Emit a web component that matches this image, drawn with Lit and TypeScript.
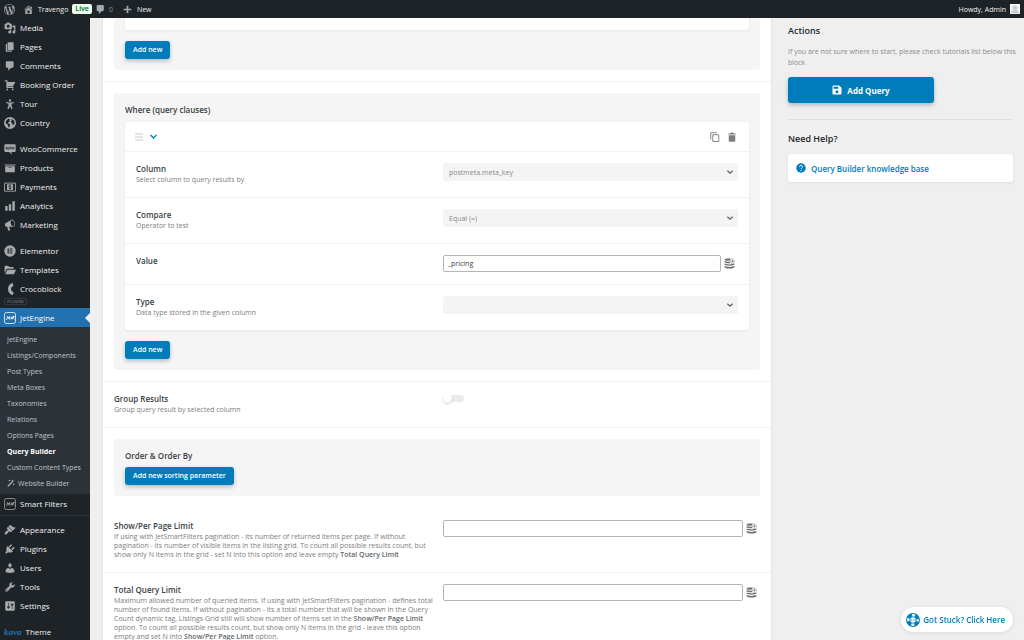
import { LitElement, html, css, svg, nothing, TemplateResult } from "lit";
import { customElement, property } from "lit/decorators.js";
import { classMap } from "lit/directives/class-map.js";

const p = (d: string) => svg`<path d=${d} />`;

const GLYPHS: Record<string, TemplateResult> = {
  wordpress: p("M20 10c0-5.51-4.49-10-10-10C4.48 0 0 4.49 0 10c0 5.52 4.48 10 10 10 5.51 0 10-4.48 10-10zM7.78 15.37L4.37 6.22c.55-.02 1.17-.08 1.17-.08.5-.06.44-1.13-.06-1.11 0 0-1.45.11-2.37.11-.18 0-.37 0-.58-.01C4.12 2.69 6.87 1.11 10 1.11c2.33 0 4.45.87 6.05 2.34-.68-.11-1.65.39-1.65 1.58 0 .74.45 1.36.9 2.1.35.61.55 1.36.55 2.46 0 1.49-1.4 5-1.4 5l-3.03-8.37c.54-.02.82-.17.82-.17.5-.05.44-1.25-.06-1.22 0 0-1.44.12-2.38.12-.87 0-2.33-.12-2.33-.12-.5-.03-.56 1.2-.06 1.22l.92.08 1.26 3.41zM17.41 10c.24-.64.74-1.87.43-4.25.7 1.29 1.05 2.71 1.05 4.25 0 3.29-1.73 6.24-4.4 7.78.97-2.59 1.94-5.2 2.92-7.78zM6.1 18.09C3.12 16.65 1.11 13.53 1.11 10c0-1.3.23-2.48.72-3.59C3.25 10.3 4.67 14.2 6.1 18.09zm4.03-6.63l2.58 6.98c-.86.29-1.76.45-2.71.45-.79 0-1.57-.11-2.29-.33.81-2.38 1.62-4.74 2.42-7.1z"),
  home: p("M16 8.5l1.53 1.53-1.06 1.06L10 4.6l-6.47 6.49-1.06-1.06L10 2.5l4 4v-2h2v4zm-6-2.46l6 5.99V18H4v-5.97zM12 17v-5H8v5h4z"),
  comments: p("M5 2h9c1.1 0 2 .9 2 2v7c0 1.1-.9 2-2 2h-2l-5 5v-5H5c-1.1 0-2-.9-2-2V4c0-1.1.9-2 2-2z"),
  plus: p("M17 8.5v3h-5.500v5.500h-3v-5.500H3v-3h5.500V3h3v5.500z"),
  media: p("M13 11V4c0-.55-.45-1-1-1h-1.67L9 1H5L3.67 3H2c-.55 0-1 .45-1 1v7c0 .55.45 1 1 1h10c.55 0 1-.45 1-1zM7 4.500c1.380 0 2.500 1.120 2.500 2.500S8.380 9.500 7 9.500 4.500 8.380 4.500 7 5.620 4.500 7 4.500zM14 6h5v10.500c0 1.380-1.120 2.500-2.500 2.500S14 17.880 14 16.500s1.120-2.500 2.500-2.500c.17 0 .34.02.5.05V9h-3V6zm-4 8.050V13h2v3.500c0 1.380-1.120 2.500-2.500 2.500S7 17.880 7 16.500 8.120 14 9.500 14c.17 0 .34.02.5.05z"),
  page: p("M6 15V2h10v13H6zm-1 1h8v2H3V5h2v11z"),
  cart: p("M6 13h9c.55 0 1 .45 1 1s-.45 1-1 1H5c-.55 0-1-.45-1-1V4H2c-.55 0-1-.45-1-1s.45-1 1-1h3c.55 0 1 .45 1 1v2h13l-4 7H6v1zm-.5 3c.83 0 1.5.67 1.5 1.500S6.330 19 5.500 19 4 18.330 4 17.500 4.670 16 5.500 16zm9 0c.83 0 1.500.67 1.500 1.500s-.67 1.500-1.500 1.500-1.500-.67-1.500-1.500.67-1.500 1.500-1.500z"),
  person: p("M10 2.200a2 2 0 1 1 0 4 2 2 0 0 1 0-4zM3.500 6.800l4.500.6h4l4.500-.6.2 1.700-4.200 1.200v2.300l1.800 6-1.900.6L10 13.200l-2.400 5.400-1.900-.6 1.800-6V9.700L3.300 8.500z"),
  globe: svg`<path fill-rule="evenodd" d="M10 0a10 10 0 1 0 0 20 10 10 0 0 0 0-20zM4.200 5.500L8 2.600l1.800 1.200-1 2.200 1.400 1.300-2.600 1-1.200 2.300 2.400.8 1.400 1.700-1.700 4.400-1.600-1.200-.6-3.300-2.300-1.700-1.500-2.600zM12.300 3.200l3.500 1.700 1.800 3.600-.8 3.500-2 1.600-1.200-3.100-2.400-1.800 1.500-2.200z" />`,
  woo: svg`<path d="M2.500 2h15A2 2 0 0 1 19.500 4v9a2 2 0 0 1-2 2H12l1.500 4-5-4h-6a2 2 0 0 1-2-2V4a2 2 0 0 1 2-2z" /><path d="M3 6l1.200 5L6 7l1.200 4L9 6M10 8.500a1.300 2 0 1 0 2.600 0 1.300 2 0 1 0-2.600 0M14.300 8.500a1.300 2 0 1 0 2.600 0 1.300 2 0 1 0-2.600 0" fill="none" stroke="#1d2327" stroke-width="1.100" />`,
  archive: p("M19 4v2H1V4h18zM2 7h16v10H2V7zm11 3V9H7v1h6z"),
  money: svg`<path d="M.8 3.500h18.400v13.500H.8z" fill="none" stroke="currentColor" stroke-width="1.500" /><path d="M5 5.500h10V15H5z" /><path d="M12 8.200c-.5-.6-1.200-.8-2-.8-1.100 0-2 .5-2 1.400 0 2 4 .9 4 2.900 0 .9-.9 1.400-2 1.400-.9 0-1.700-.3-2.100-.9M10 6.400v7.800" fill="none" stroke="#1d2327" stroke-width="1.200" />`,
  chart: p("M18 18V2h-4v16h4zm-6 0V7H8v11h4zm-6 0v-8H2v8h4z"),
  megaphone: p("M18.150 5.940c.46 1.620.38 3.220-.02 4.480-.42 1.280-1.260 2.180-2.300 2.480-.16.06-.26.06-.4.06-.06.02-.12.02-.18.02-.06.02-.14.02-.22.02h-6.800l2.220 5.500c.02.14-.06.26-.14.34-.08.1-.24.16-.34.16H6.950c-.1 0-.26-.06-.34-.16-.08-.08-.16-.2-.14-.34l-1-5.500H4.250l-.02-.02c-.5.06-1.080-.18-1.540-.62s-.88-1.080-1.060-1.880c-.24-.8-.2-1.560-.02-2.200.18-.62.58-1.080 1.060-1.300l.02-.02 9-5.400c.1-.06.18-.1.24-.16.06-.04.14-.08.24-.12.16-.08.28-.12.5-.18 1.040-.3 2.240.1 3.220.98s1.840 2.240 2.260 3.860zm-2.580 5.980h-.02c.4-.1.74-.34 1.040-.7.58-.7.86-1.760.86-3.040 0-.64-.1-1.300-.28-1.980-.34-1.360-1.020-2.500-1.780-3.240s-1.680-1.100-2.460-.88c-.82.22-1.400.96-1.700 2-.32 1.040-.28 2.360.06 3.720.38 1.360 1 2.500 1.800 3.240.78.74 1.620 1.100 2.480.88z"),
  elementor: svg`<path fill-rule="evenodd" d="M10 .5a9.500 9.500 0 1 0 0 19 9.500 9.500 0 0 0 0-19zM6 6h1.900v8H6zm3.200 0H14v1.700H9.200zm0 3.150H14v1.700H9.200zm0 3.150H14V14H9.200z" />`,
  folder: p("M1 15.500V4.500C1 3.700 1.700 3 2.500 3H7l2 2h5.500c.8 0 1.500.7 1.500 1.500V8H5.800c-.8 0-1.500.5-1.800 1.200zM5.500 9.500H20L16.600 17H2z"),
  croco: svg`<path d="M15 2.500A8 8 0 0 0 15.500 18" fill="none" stroke="currentColor" stroke-width="5" />`,
  jet: svg`<rect x=".8" y=".8" width="18.400" height="18.400" rx="3.500" fill="none" stroke="currentColor" stroke-width="1.300" /><path d="M3 12c2 .8 2.600 0 2.600-1.500V7M10 8c-2.600-1.600-3.600 2.800-1.700 3.700 1.200.5 2-.2 2.500-.8M7.300 9.800l3.500-1M11.500 12l2-4 .5 4 2.800-4.500M14.500 7.500h3M16 10.500l1.500 1.500" fill="none" stroke="currentColor" stroke-width="1.400" />`,
  wand: svg`<path d="M2 18.500L12.500 8" stroke="currentColor" stroke-width="3" /><path d="M14 1l1 2.800L18 5l-3 1-1 3-1-3-3-1 3-1.200zM6 1l.8 2.200L9 4l-2.200.8L6 7l-.8-2.200L3 4l2.200-.8zM17 10l.8 2.200 2.200.8-2.200.8L17 16l-.8-2.200L14 13l2.200-.8z" />`,
  appearance: p("M14.480 11.060L7.410 3.990l1.500-1.500c.5-.56 2.300-.47 3.510.32 1.210.8 1.430 1.280 2.910 2.100 1.180.64 2.450 1.260 4.450.85zm-.71.71L6.700 4.700 4.930 6.470c-.39.39-.39 1.020 0 1.410l1.060 1.060c.39.39.39 1.030 0 1.420-.6.6-1.430 1.110-2.210 1.690-.35.26-.7.53-1.010.84C1.430 14.230.4 16.080 1.400 17.070c.99 1 2.840-.03 4.180-1.360.31-.31.58-.66.85-1.020.57-.78 1.080-1.610 1.690-2.210.39-.39 1.020-.39 1.410 0l1.060 1.060c.39.39 1.020.39 1.410 0z"),
  plugins: p("M13.110 4.360L9.870 7.600 8 5.730l3.240-3.240c.35-.34 1.050-.2 1.560.32.52.51.66 1.210.31 1.550zm-8 1.770l.91-1.120 9.010 9.010-1.190.84c-.71.71-2.630 1.160-3.820 1.160H6.140L4.900 17.260c-.59.59-1.540.59-2.120 0-.59-.58-.59-1.530 0-2.120l1.240-1.240v-3.880c0-1.130.4-3.190 1.090-3.890zm7.260 3.970l3.240-3.240c.34-.35 1.040-.21 1.550.31.52.51.66 1.210.31 1.550l-3.240 3.250z"),
  users: p("M10 9.250c-2.270 0-2.730-3.440-2.730-3.440C7 4.020 7.820 2 9.970 2c2.160 0 2.980 2.020 2.710 3.810 0 0-.41 3.440-2.680 3.440zm0 2.570L12.720 10c2.390 0 4.520 2.330 4.520 4.530v2.490s-3.650 1.130-7.240 1.130c-3.650 0-7.240-1.130-7.240-1.130v-2.490c0-2.250 1.940-4.480 4.470-4.480z"),
  tools: p("M16.680 9.770c-1.340 1.340-3.300 1.670-4.950.99l-5.410 6.520c-.99.99-2.590.99-3.580 0s-.99-2.590 0-3.570l6.520-5.420c-.68-1.650-.35-3.610.99-4.950 1.280-1.280 3.120-1.620 4.720-1.060l-2.890 2.890 2.820 2.820 2.860-2.870c.53 1.580.18 3.390-1.080 4.650zM3.810 16.210c.4.39 1.040.39 1.430 0 .4-.4.4-1.040 0-1.430-.39-.4-1.030-.4-1.430 0-.39.39-.39 1.030 0 1.430z"),
  settings: p("M18 16V4c0-1.100-.9-2-2-2H4c-1.100 0-2 .9-2 2v12c0 1.100.9 2 2 2h12c1.100 0 2-.9 2-2zM8 11h1c.55 0 1 .45 1 1s-.45 1-1 1H8v1.500c0 .28-.22.5-.5.5s-.5-.22-.5-.5V13H6c-.55 0-1-.45-1-1s.45-1 1-1h1V5.500c0-.28.22-.5.5-.5s.5.22.5.5V11zm5-2h-1c-.55 0-1-.45-1-1s.45-1 1-1h1V5.500c0-.28.22-.5.5-.5s.5.22.5.5V7h1c.55 0 1 .45 1 1s-.45 1-1 1h-1v5.500c0 .28-.22.5-.5.5s-.5-.22-.5-.5V9z"),
  avatar: svg`<path d="M0 0h20v20H0z" fill="#f3f3f3" /><path d="M10 3a4.300 4.600 0 0 1 2.600 8.500c.2 2 5.400 1.800 6.400 6.500H1c1-4.700 6.200-4.500 6.400-6.500A4.300 4.600 0 0 1 10 3z" fill="#c9cbcd" /><path d="M0 18h20v2H0z" fill="#c9cbcd" /><path d="M.7.7h18.600v18.600H.7z" fill="none" stroke="#fff" stroke-width="1.400" />`,
  grip: p("M2 2.500h16v3H2zM2 8.500h16v3H2zM2 14.500h16v3H2z"),
  chevron: svg`<path d="M3.500 6.800l6.500 6.400 6.500-6.400" fill="none" stroke="currentColor" stroke-width="3" />`,
  copy: svg`<path d="M1.500 15V1.500H14" fill="none" stroke="currentColor" stroke-width="1.800" /><path d="M5.500 5.500h12v13.600h-12z" fill="none" stroke="currentColor" stroke-width="1.800" />`,
  trash: p("M2.500 2.800h4L7.600 1h4.800l1.100 1.800h4v2.400h-15zM3.500 6.300h13v11A2 2 0 0 1 14.500 19.300h-9a2 2 0 0 1-2-2z"),
  database: svg`<path d="M9 1c1.400 0 2.700.1 3.800.4A5 5 0 0 0 10.200 5C4.900 5.100 1 4.500 1 3.200S4.300 1 9 1zM1 5.600c2 1.100 5.500 1.500 9.200 1.300.2 1.100.8 2 1.600 2.700C6.500 9.900 1 9.300 1 7.300zM1 10.200c2.900 1.900 14.100 2 18 0v1.700c-1.600 2.700-16.400 2.700-18 0zM1 14.700c2.900 1.900 14.100 2 18 0v2c-1.600 3.100-16.400 3.100-18 0z" /><circle cx="15.300" cy="5.700" r="4.100" fill="none" stroke="currentColor" stroke-width="1.100" stroke-dasharray="2.200 1" /><path d="M15.300 3.400V8M13 5.700h4.600" stroke="currentColor" stroke-width="1.300" />`,
  save: svg`<path fill-rule="evenodd" d="M3 1h11.500L19 5.500V17a2 2 0 0 1-2 2H3a2 2 0 0 1-2-2V3a2 2 0 0 1 2-2zm.2 2.500v4h9.300v-4zM10 10.400a3 3 0 1 0 0 6 3 3 0 0 0 0-6z" />`,
  help: svg`<circle cx="10" cy="10" r="9.500" /><path d="M7 7.800c0-4 6.200-3.800 6.200-.3 0 2.200-3 2.200-3 4.700" fill="none" stroke="#fff" stroke-width="1.900" /><path d="M9.200 13.800h2v2h-2z" fill="#fff" />`,
  buoy: svg`<circle cx="10" cy="10" r="9.200" fill="none" stroke="currentColor" stroke-width="1.500" /><circle cx="10" cy="10" r="7" fill="none" stroke="currentColor" stroke-width="4" stroke-dasharray="6.600 4.396" stroke-dashoffset="-2.198" /><circle cx="10" cy="10" r="4.600" fill="none" stroke="currentColor" stroke-width="1.300" /><path d="M7.300 10h1.200M9.400 10h1.200M11.500 10h1.200" stroke="currentColor" stroke-width="1.600" />`,
};

@customElement("ui-icon")
class UiIcon extends LitElement {
  @property() name = "";
  static styles = css`
    :host { display: block; flex: none; width: 11px; height: 11px; }
    .glyph { display: block; width: 100%; height: 100%; fill: currentColor; }
  `;
  render() {
    return html`<svg class="glyph" viewBox="0 0 20 20" aria-hidden="true">${GLYPHS[this.name] ?? nothing}</svg>`;
  }
}

type MenuItem = { label: string; icon: string };
const GROUPS: MenuItem[][] = [
  [
    { label: "Media", icon: "media" },
    { label: "Pages", icon: "page" },
    { label: "Comments", icon: "comments" },
    { label: "Booking Order", icon: "cart" },
    { label: "Tour", icon: "person" },
    { label: "Country", icon: "globe" },
  ],
  [
    { label: "WooCommerce", icon: "woo" },
    { label: "Products", icon: "archive" },
    { label: "Payments", icon: "money" },
    { label: "Analytics", icon: "chart" },
    { label: "Marketing", icon: "megaphone" },
  ],
  [
    { label: "Elementor", icon: "elementor" },
    { label: "Templates", icon: "folder" },
    { label: "Crocoblock", icon: "croco" },
  ],
];
const SUBMENU = [
  "JetEngine", "Listings/Components", "Post Types", "Meta Boxes", "Taxonomies",
  "Relations", "Options Pages", "Query Builder", "Custom Content Types", "Website Builder",
];
const ADMIN_ITEMS: MenuItem[] = [
  { label: "Appearance", icon: "appearance" },
  { label: "Plugins", icon: "plugins" },
  { label: "Users", icon: "users" },
  { label: "Tools", icon: "tools" },
  { label: "Settings", icon: "settings" },
];

@customElement("admin-menu")
class AdminMenu extends LitElement {
  static styles = css`
    :host { display: block; background: #1d2327; color: #f0f0f1; font-size: 8px; overflow: hidden; box-sizing: border-box; }
    ul { list-style: none; margin: 0; padding: 0; }
    a { color: inherit; text-decoration: none; }
    .group { padding-bottom: 7px; }
    .group.tight { padding-bottom: 0; }
    .group.lined { padding-bottom: 2px; margin-bottom: 4px; border-bottom: 1px solid #2f353b; }
    .item { display: flex; align-items: center; gap: 4px; height: 19px; padding-left: 4px; white-space: nowrap; }
    .item ui-icon { color: #a7aaad; width: 12px; height: 12px; }
    .item.current { position: relative; background: #2271b1; color: #fff; }
    .item.current ui-icon { color: #fff; }
    .item.current::after { content: ""; position: absolute; right: 0; top: 5px; border: 5px solid transparent; border-right-color: #f0f0f1; border-left-width: 0; }
    .tag { display: flex; height: 10px; align-items: flex-start; padding-left: 4px; }
    .tag span { font-size: 4px; line-height: 5px; padding: 0 2px; color: #8c8f94; border: 1px solid #32383e; border-radius: 2px; box-sizing: border-box; }
    .sub { background: #2c3338; color: #bfc3c7; padding: 4px 0 3px; font-size: 7px; }
    .sub a { display: flex; align-items: center; gap: 3px; height: 16px; padding-left: 7px; white-space: nowrap; }
    .sub a.on { color: #fff; font-weight: 700; }
    .sub ui-icon { width: 8px; height: 8px; }
    .kava { font: italic 700 9px "Liberation Serif", serif; color: #2271b1; }
  `;
  private item(i: MenuItem, current = false) {
    return html`<li><a href="#" class=${classMap({ item: true, current })}><ui-icon name=${i.icon}></ui-icon>${i.label}</a></li>`;
  }
  render() {
    return html`
      <nav aria-label="Main menu">
        ${GROUPS.map((g, n) => html`<ul class=${classMap({ group: true, tight: n === 2 })}>${g.map((i) => this.item(i))}</ul>`)}
        <div class="tag"><span>PLUGINS</span></div>
        <ul class="group lined">
          ${this.item({ label: "JetEngine", icon: "jet" }, true)}
          <li>
            <div class="sub">
              ${SUBMENU.map((s) => html`<a href="#" class=${classMap({ on: s === "Query Builder" })}>${s === "Website Builder" ? html`<ui-icon name="wand"></ui-icon>` : nothing}${s}</a>`)}
            </div>
          </li>
          ${this.item({ label: "Smart Filters", icon: "jet" })}
        </ul>
        <ul class="group">${ADMIN_ITEMS.map((i) => this.item(i))}</ul>
        <a href="#" class="item"><span class="kava">kava</span>Theme</a>
      </nav>
    `;
  }
}

@customElement("app-root")
class AppRoot extends LitElement {
  static styles = css`
    :host { display: flex; flex-direction: column; height: 100vh; overflow: hidden; font-family: "Open Sans", "Noto Sans", sans-serif; font-size: 7px; line-height: 9px; color: #7b7e81; background: #efefef; }
    * { box-sizing: border-box; }
    h2, h3, p { margin: 0; }
    a { text-decoration: none; }
    button, input, select { font: inherit; margin: 0; }
    button { border: 0; cursor: pointer; }

    .bar { flex: none; display: flex; align-items: center; height: 18px; padding: 0 4px; background: #1d2327; color: #f0f0f1; }
    .bar a { display: flex; align-items: center; color: inherit; font-size: 7px; gap: 4px; white-space: nowrap; }
    .bar ui-icon { color: #a7aaad; }
    .site { margin-left: 8px; }
    .live { margin: 0 3px 0 4px; padding: 0 3px; border-radius: 2px; background: #edfaef; color: #00701a; font-size: 7px; line-height: 10px; font-weight: 600; }
    .bar .count { color: #8c8f94; margin-right: 9px; gap: 3px; }
    .bar .me { margin-left: auto; }
    .me ui-icon { width: 10px; height: 10px; }

    .body { flex: 1; min-height: 0; display: flex; }
    admin-menu { flex: none; width: 90px; }
    .panel { flex: 1; min-width: 0; margin-left: 13px; background: #fff; box-shadow: 0 0 2px rgba(35, 40, 45, 0.12); overflow: hidden; }
    .side { flex: none; width: 253px; padding: 6px 11px 0 17px; }

    .block { padding: 11px; border-bottom: 1px solid #f2f2f2; }
    .block.first { padding-top: 0; }
    .block.open { border-bottom: 0; padding-bottom: 13px; }
    .box { background: #f5f5f5; border-radius: 3px; padding: 11px; }
    .first .box { padding-top: 0; }
    .card { background: #fff; border-radius: 3px; box-shadow: 0 1px 3px rgba(35, 40, 45, 0.07); margin-bottom: 11px; }
    .first .card { height: 12px; border-radius: 0 0 3px 3px; }
    .title { font-size: 8px; line-height: 12px; font-weight: 600; color: #3a3f44; }
    .box .title { margin-bottom: 6px; }
    .order .title { margin-bottom: 5px; }
    .btn { display: block; height: 18px; padding: 0 8px; border-radius: 3px; background: #007cba; color: #fff; font-weight: 600; font-size: 7px; line-height: 18px; box-shadow: 0 2px 4px rgba(0, 40, 70, 0.28); }

    .head { display: flex; align-items: center; height: 30px; padding: 0 12px 0 9px; border-bottom: 1px solid #f2f2f2; }
    .head button { display: block; padding: 0; background: none; color: #7b7e7e; }
    .head .grip { color: #dcdcdd; margin-right: 5px; }
    .head .fold { color: #007cba; }
    .head .copy { margin: 0 7px 0 auto; }
    .head ui-icon { width: 10px; height: 10px; }
    .head .fold ui-icon { width: 9px; height: 9px; }

    .field { display: grid; grid-template-columns: 51% 49%; padding: 11px; border-bottom: 1px solid #f2f2f2; }
    .field:last-child { border-bottom: 0; }
    .field .text { padding-right: 4px; padding-bottom: 2px; }
    .field .text label { display: block; font-size: 8px; line-height: 12px; font-weight: 600; color: #3a3f44; }
    .field b { font-weight: 600; color: #63676a; }
    .pick { display: grid; height: 18px; }
    .pick select { grid-area: 1 / 1; appearance: none; width: 100%; height: 18px; padding: 0 6px; border: 0; border-radius: 2px; background: #f4f4f4; color: #86898c; font-size: 7px; opacity: 1; }
    .pick ui-icon { grid-area: 1 / 1; place-self: center end; margin-right: 4px; width: 8px; height: 8px; color: #5a5e61; pointer-events: none; }
    .entry { display: flex; align-items: center; gap: 3px; height: 18px; padding: 0 3px 1px 0; }
    .entry input { flex: 1; min-width: 0; height: 17px; padding: 0 4px; border: 1px solid #b4b6b9; border-radius: 2px; background: #fff; color: #3c4146; outline: 0; }
    .entry button { padding: 0; background: none; color: #6a6d70; }
    .switch { appearance: none; position: relative; width: 20px; height: 7px; border-radius: 4px; background: #ebebeb; margin: 2px 0 0 1px; }
    .switch::before { content: ""; position: absolute; left: -1px; top: -1px; width: 9px; height: 9px; border-radius: 50%; background: #fff; box-shadow: 0 1px 2px rgba(0, 0, 0, 0.2); }

    .side h2 { font-size: 9px; line-height: 13px; font-weight: 600; color: #23282d; }
    .side p { margin: 9px -8px 9px 0; line-height: 11px; color: #8b8d90; }
    .save { display: flex; align-items: center; justify-content: center; gap: 5px; width: 146px; height: 26px; border-radius: 3px; background: #007cba; color: #fff; font-size: 8px; font-weight: 700; box-shadow: 0 2px 4px rgba(0, 40, 70, 0.28); }
    .save ui-icon { width: 10px; height: 10px; }
    .side hr { border: 0; border-top: 1px solid #dfdfe0; margin: 16px 0 12px; }
    .kb { display: flex; align-items: center; gap: 5px; height: 28px; margin-top: 9px; padding-left: 8px; border-radius: 3px; background: #fff; color: #007cba; font-size: 8px; font-weight: 600; box-shadow: 0 1px 3px rgba(35, 40, 45, 0.07); }
    .kb ui-icon { width: 10px; height: 10px; }
    .stuck { position: fixed; right: 11px; bottom: 8px; display: flex; align-items: center; gap: 3px; height: 25px; padding: 0 8px 0 5px; border-radius: 13px; background: #fff; color: #007cba; font-size: 8px; font-weight: 600; box-shadow: 0 1px 4px rgba(35, 40, 45, 0.1); white-space: nowrap; }
    .stuck ui-icon { width: 14px; height: 14px; }
  `;

  private select(id: string, label: string, hint: string, value: string) {
    return html`<div class="field">
      <div class="text"><label for=${id}>${label}</label>${hint}</div>
      <div class="pick">
        <select id=${id}><option>${value}</option></select>
        <ui-icon name="chevron"></ui-icon>
      </div>
    </div>`;
  }

  private input(id: string, label: string, hint: unknown, value = "") {
    return html`<div class="field">
      <div class="text"><label for=${id}>${label}</label>${hint}</div>
      <div class="entry">
        <input id=${id} type="text" .value=${value} />
        <button aria-label="Dynamic value"><ui-icon name="database"></ui-icon></button>
      </div>
    </div>`;
  }

  render() {
    return html`
      <header class="bar">
        <a href="#" aria-label="WordPress"><ui-icon name="wordpress"></ui-icon></a>
        <a href="#" class="site"><ui-icon name="home"></ui-icon>Travengo</a>
        <span class="live">Live</span>
        <a href="#" class="count"><ui-icon name="comments"></ui-icon>0</a>
        <a href="#"><ui-icon name="plus"></ui-icon>New</a>
        <a href="#" class="me">Howdy, Admin<ui-icon name="avatar"></ui-icon></a>
      </header>
      <div class="body">
        <admin-menu></admin-menu>
        <main class="panel">
          <section class="block first">
            <div class="box"><div class="card"></div><button class="btn">Add new</button></div>
          </section>
          <section class="block">
            <div class="box">
              <h3 class="title">Where (query clauses)</h3>
              <div class="card">
                <div class="head">
                  <button class="grip" aria-label="Move"><ui-icon name="grip"></ui-icon></button>
                  <button class="fold" aria-label="Collapse"><ui-icon name="chevron"></ui-icon></button>
                  <button class="copy" aria-label="Duplicate"><ui-icon name="copy"></ui-icon></button>
                  <button aria-label="Delete"><ui-icon name="trash"></ui-icon></button>
                </div>
                ${this.select("column", "Column", "Select column to query results by", "postmeta.meta_key")}
                ${this.select("compare", "Compare", "Operator to test", "Equal (=)")}
                ${this.input("value", "Value", nothing, "_pricing")}
                ${this.select("type", "Type", "Data type stored in the given column", "")}
              </div>
              <button class="btn">Add new</button>
            </div>
          </section>
          <div class="field">
            <div class="text"><label for="group">Group Results</label>Group query result by selected column</div>
            <input id="group" class="switch" type="checkbox" />
          </div>
          <section class="block open">
            <div class="box order">
              <h3 class="title">Order &amp; Order By</h3>
              <button class="btn">Add new sorting parameter</button>
            </div>
          </section>
          ${this.input("limit", "Show/Per Page Limit", html`If using with JetSmartFilters pagination - its number of returned items per page. If without pagination - its number of visible items in the listing grid. To count all possible results count, but show only N items in the grid - set N into this option and leave empty <b>Total Query Limit</b>`)}
          ${this.input("total", "Total Query Limit", html`Maximum allowed number of queried items. If using with JetSmartFilters pagination - defines total number of found items. If without pagination - its a total number that will be shown in the Query Count dynamic tag, Listings Grid still will show number of items set in the <b>Show/Per Page Limit</b> option. To count all possible results count, but show only N items in the grid - leave this option empty and set N into <b>Show/Per Page Limit</b> option.`)}
        </main>
        <aside class="side">
          <h2>Actions</h2>
          <p>If you are not sure where to start, please check tutorials list below this block</p>
          <button class="save"><ui-icon name="save"></ui-icon>Add Query</button>
          <hr />
          <h2>Need Help?</h2>
          <a class="kb" href="#"><ui-icon name="help"></ui-icon>Query Builder knowledge base</a>
        </aside>
      </div>
      <a class="stuck" href="#"><ui-icon name="buoy"></ui-icon>Got Stuck? Click Here</a>
    `;
  }
}
